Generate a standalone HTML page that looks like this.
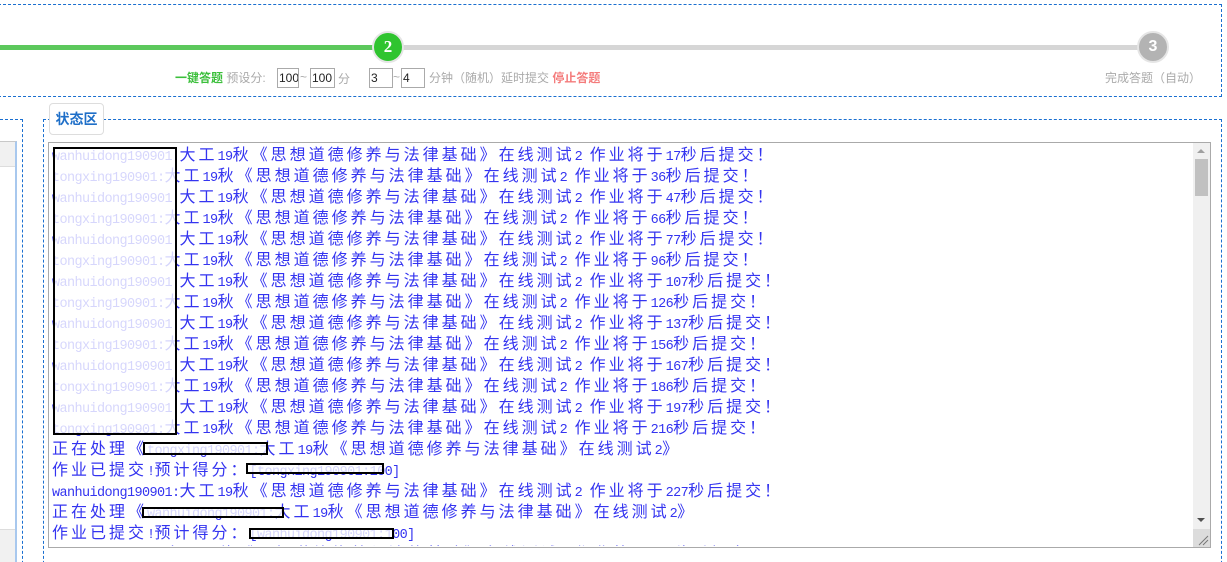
<!DOCTYPE html>
<html><head><meta charset="utf-8"><style>
*{margin:0;padding:0;box-sizing:border-box}
html,body{width:1227px;height:562px;overflow:hidden}
body{background:#fff;position:relative;font-family:"Liberation Sans","Noto Sans CJK SC",sans-serif;font-size:12px}
#wrap{position:absolute;left:0;top:0;width:1227px;height:562px;overflow:hidden}
.abs{position:absolute}
.dash{border:1px dashed #1a6fd0}
.inp{position:absolute;top:68px;height:20px;border:1px solid #aaa;font-size:12px;line-height:18px;padding-left:1px;color:#222;overflow:hidden;white-space:nowrap;font-family:"Liberation Sans",sans-serif}
.g{color:#aaa}
#log{position:absolute;left:49px;top:143px;width:1144px;height:403px;overflow:hidden;color:#3434f0;font-family:"Noto Sans CJK SC",sans-serif;font-size:16px;letter-spacing:3px;padding:0 0 0 3px;white-space:pre}
#log div{height:21px;line-height:21px;overflow:visible}
#log .l{font-family:"Liberation Mono",monospace;font-size:13.5px;letter-spacing:-0.6px;line-height:0}
.red{position:absolute;border:2px solid #000;background:rgba(255,255,255,0.8)}
</style></head><body><div id="wrap">
<div class="abs dash" style="left:-2px;top:4px;width:1224px;height:93px"></div>
<div class="abs" style="left:0;top:45px;width:380px;height:5px;background:#5cc85c"></div>
<div class="abs" style="left:396px;top:45px;width:745px;height:5px;background:#d6d6d6"></div>
<div class="abs" style="left:372px;top:31px;width:32px;height:32px;border-radius:50%;background:#2fc42f;border:2px solid #e5e5e5;color:#fff;font-weight:bold;font-size:17px;text-align:center;line-height:28px;font-family:'Liberation Serif',serif">2</div>
<div class="abs" style="left:1137px;top:31px;width:32px;height:32px;border-radius:50%;background:#b3b3b3;border:2px solid #e5e5e5;color:#fff;font-weight:bold;font-size:16px;text-align:center;line-height:28px">3</div>
<div class="abs" style="left:175px;top:70px;white-space:nowrap;line-height:16px"><b style="color:#3bbf3b">一键答题</b> <span class="g">预设分:</span></div>
<div class="inp" style="left:277px;width:22px">100</div>
<div class="abs g" style="left:300px;top:70px">~</div>
<div class="inp" style="left:310px;width:25px">100</div>
<div class="abs g" style="left:338px;top:70px">分</div>
<div class="inp" style="left:369px;width:24px">3</div>
<div class="abs g" style="left:393px;top:70px">~</div>
<div class="inp" style="left:401px;width:24px">4</div>
<div class="abs" style="left:429px;top:70px;white-space:nowrap;line-height:16px"><span class="g">分钟（随机）延时提交</span> <b style="color:#f47b7b">停止答题</b></div>
<div class="abs g" style="left:1105px;top:70px;white-space:nowrap;line-height:16px">完成答题（自动）</div>

<div class="abs dash" style="left:-5px;top:119px;width:28px;height:460px"></div>
<div class="abs" style="left:-2px;top:141px;width:19px;height:430px;border:1px solid #c8c8c8;border-right:2px solid #a8c8ee;background:#fff"></div>
<div class="abs" style="left:-1px;top:142px;width:16px;height:25px;background:#f1f1f1;border-bottom:1px solid #ddd"></div>
<div class="abs" style="left:-1px;top:529px;width:16px;height:40px;background:#f1f1f1;border-top:1px solid #ddd"></div>

<div class="abs dash" style="left:43px;top:119px;width:1179px;height:460px"></div>
<div class="abs" style="left:49px;top:103px;width:55px;height:32px;background:#fff;border:1px solid #ddd;border-radius:4px;color:#1f6fc8;font-weight:bold;font-size:14px;text-align:center;line-height:30px">状态区</div>
<div class="abs" style="left:48px;top:142px;width:1163px;height:406px;border:1px solid #aaa;background:#fff"></div>
<div id="log">wanhuidong190901:大工19秋《思想道德修养与法律基础》在线测试2 作业将于17秒后提交！
tongxing190901:大工19秋《思想道德修养与法律基础》在线测试2 作业将于36秒后提交！
wanhuidong190901:大工19秋《思想道德修养与法律基础》在线测试2 作业将于47秒后提交！
tongxing190901:大工19秋《思想道德修养与法律基础》在线测试2 作业将于66秒后提交！
wanhuidong190901:大工19秋《思想道德修养与法律基础》在线测试2 作业将于77秒后提交！
tongxing190901:大工19秋《思想道德修养与法律基础》在线测试2 作业将于96秒后提交！
wanhuidong190901:大工19秋《思想道德修养与法律基础》在线测试2 作业将于107秒后提交！
tongxing190901:大工19秋《思想道德修养与法律基础》在线测试2 作业将于126秒后提交！
wanhuidong190901:大工19秋《思想道德修养与法律基础》在线测试2 作业将于137秒后提交！
tongxing190901:大工19秋《思想道德修养与法律基础》在线测试2 作业将于156秒后提交！
wanhuidong190901:大工19秋《思想道德修养与法律基础》在线测试2 作业将于167秒后提交！
tongxing190901:大工19秋《思想道德修养与法律基础》在线测试2 作业将于186秒后提交！
wanhuidong190901:大工19秋《思想道德修养与法律基础》在线测试2 作业将于197秒后提交！
tongxing190901:大工19秋《思想道德修养与法律基础》在线测试2 作业将于216秒后提交！
正在处理《tongxing190901:大工19秋《思想道德修养与法律基础》在线测试2》
作业已提交!预计得分：[tongxing190901:100]
wanhuidong190901:大工19秋《思想道德修养与法律基础》在线测试2 作业将于227秒后提交！
正在处理《wanhuidong190901:大工19秋《思想道德修养与法律基础》在线测试2》
作业已提交!预计得分：[wanhuidong190901:100]
tongxing190901:大工19秋《思想道德修养与法律基础》在线测试2 作业将于246秒后提交！</div>
<div class="red" style="left:53px;top:147px;width:124px;height:288px"></div>
<div class="red" style="left:143px;top:442px;width:125px;height:13px"></div>
<div class="red" style="left:246px;top:463px;width:138px;height:11px"></div>
<div class="red" style="left:142px;top:507px;width:142px;height:11px"></div>
<div class="red" style="left:249px;top:528px;width:145px;height:11px"></div>
<div class="abs" style="left:1193px;top:143px;width:17px;height:404px;background:#f0f0f0"></div>
<div class="abs" style="left:1195px;top:159px;width:13px;height:37px;background:#c1c1c1"></div>
<div class="abs" style="left:1197px;top:149px;width:0;height:0;border:4px solid transparent;border-bottom:4px solid #a0a0a0;border-top:0"></div>
<div class="abs" style="left:1197px;top:518px;width:0;height:0;border:4px solid transparent;border-top:4px solid #505050;border-bottom:0"></div>
<div class="abs" style="left:1193px;top:529px;width:17px;height:18px;background:#dcdcdc"></div>
<svg class="abs" style="left:1198px;top:535px" width="11" height="11"><path d="M10 1L1 10M10 5L5 10" stroke="#777" stroke-width="1"/></svg>
</div>
<script>
var el=document.getElementById('log');
var lines=el.textContent.split('\n');
el.innerHTML=lines.map(function(s){return '<div>'+s.replace(/[A-Za-z0-9:!\[\] ]+/g,function(m){return '<span class="l">'+m+'</span>';})+'</div>';}).join('');
</script>
</body></html>
